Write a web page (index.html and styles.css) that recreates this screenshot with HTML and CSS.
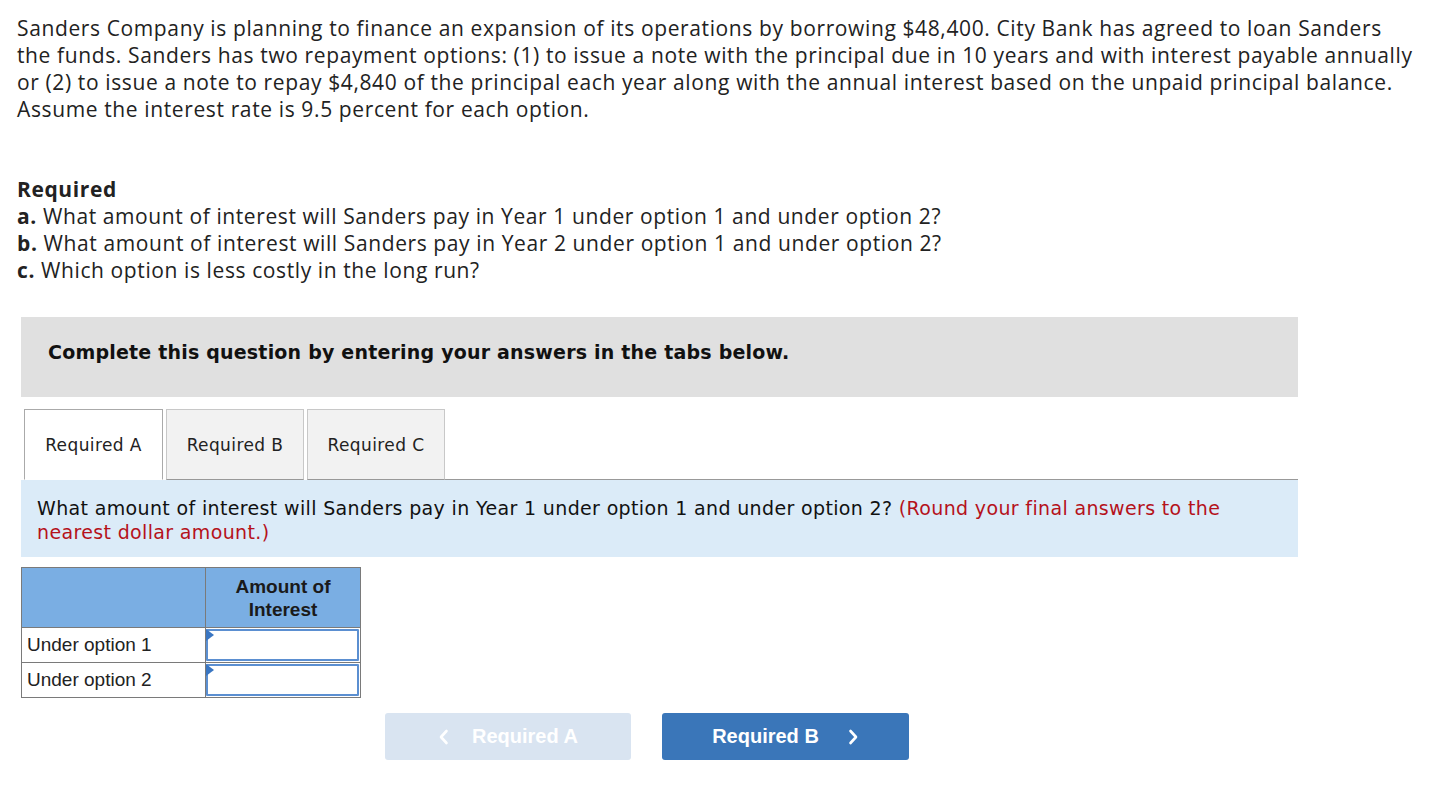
FILE: index.html
```html
<!DOCTYPE html>
<html>
<head>
<meta charset="utf-8">
<link rel="stylesheet" href="styles.css">
</head>
<body>
<div class="page">
  <p class="intro">Sanders Company is planning to finance an expansion of its operations by borrowing $48,400. City Bank has agreed to loan Sanders the funds. Sanders has two repayment options: (1) to issue a note with the principal due in 10 years and with interest payable annually or (2) to issue a note to repay $4,840 of the principal each year along with the annual interest based on the unpaid principal balance. Assume the interest rate is 9.5 percent for each option.</p>

  <div class="required">
    <div class="req-title">Required</div>
    <div><b>a.</b> What amount of interest will Sanders pay in Year 1 under option 1 and under option 2?</div>
    <div><b>b.</b> What amount of interest will Sanders pay in Year 2 under option 1 and under option 2?</div>
    <div><b>c.</b> Which option is less costly in the long run?</div>
  </div>

  <div class="panel">
    <div class="instructions">Complete this question by entering your answers in the tabs below.</div>

    <div class="tabs">
      <div class="tab active">Required A</div>
      <div class="tab">Required B</div>
      <div class="tab">Required C</div>
      <div class="tab-rest"></div>
    </div>

    <p class="question">What amount of interest will Sanders pay in Year 1 under option 1 and under option 2? <span class="hint">(Round your final answers to the nearest dollar amount.)</span></p>

    <table class="grid">
      <tr class="head">
        <th class="blank"></th>
        <th class="col">Amount of<br>Interest</th>
      </tr>
      <tr>
        <td class="label">Under option 1</td>
        <td class="cell"><div class="input"><span class="flag"></span></div></td>
      </tr>
      <tr>
        <td class="label">Under option 2</td>
        <td class="cell"><div class="input"><span class="flag"></span></div></td>
      </tr>
    </table>

    <div class="nav">
      <div class="btn disabled">
        <svg class="chev left" width="11" height="16" viewBox="0 0 11 16"><path d="M8.5 2 L3 8 L8.5 14" fill="none" stroke="#fff" stroke-width="2.6" stroke-linecap="round" stroke-linejoin="round"/></svg>
        <span>Required A</span>
      </div>
      <div class="btn primary">
        <span>Required B</span>
        <svg class="chev right" width="11" height="16" viewBox="0 0 11 16"><path d="M2.5 2 L8 8 L2.5 14" fill="none" stroke="#fff" stroke-width="2.6" stroke-linecap="round" stroke-linejoin="round"/></svg>
      </div>
    </div>
  </div>
</div>
</body>
</html>
```
FILE: styles.css
```css
* { box-sizing: border-box; }
html, body { margin: 0; padding: 0; background: #fff; }
.page { padding: 15px 0 0 17px; color: #222; }

.intro {
  margin: 0;
  width: 1398px;
  font-family: "Open Sans", sans-serif;
  font-size: 21px;
  letter-spacing: 0.62px;
  line-height: 27px;
  color: #222;
}

.required {
  margin-top: 53px;
  font-family: "Open Sans", sans-serif;
  font-size: 21px;
  letter-spacing: 0.6px;
  line-height: 27px;
  color: #222;
}
.req-title { font-weight: 700; }
.required b { font-weight: 700; }

.panel { margin-left: 4px; width: 1277px; margin-top: 33px; }

.instructions {
  background: #e0e0e0;
  height: 80px;
  display: flex;
  align-items: center;
  padding-left: 27px;
  padding-bottom: 10px;
  font-family: "DejaVu Sans", Verdana, sans-serif;
  font-weight: 700;
  font-size: 19px;
  letter-spacing: 0.2px;
  color: #111;
}

.tabs {
  display: flex;
  margin-top: 12px;
  height: 71px;
  align-items: stretch;
}
.tab {
  font-family: "DejaVu Sans", Verdana, sans-serif;
  font-size: 17px;
  letter-spacing: 0.4px;
  color: #222;
  border: 1px solid #c8c8c8;
  border-bottom: 1px solid #999;
  background: #f2f2f2;
  width: 138px;
  display: flex;
  align-items: center;
  justify-content: center;
  margin-right: 3px;
}
.tab:first-child { margin-left: 3px; }
.tab.active { background: #fff; border-color: #aaa; border-bottom: 1px solid #fff; width: 139px; }
.tab-rest { flex: 1; border-bottom: 1px solid #999; margin-left: -3px; }

.question {
  margin: 0;
  background: #dbebf8;
  padding: 16px 16px 13px 16px;
  font-family: "DejaVu Sans", Verdana, sans-serif;
  font-size: 19px;
  letter-spacing: 0.35px;
  line-height: 24px;
  color: #111;
}
.hint { color: #b5121b; }

.grid {
  margin-top: 10px;
  border-collapse: collapse;
  font-family: "Liberation Sans", Arial, sans-serif;
}
.grid th, .grid td { border: 1px solid #7a7a7a; padding: 0; }
.grid .head th {
  background: #7aaee3;
  height: 60px;
  font-weight: 700;
  font-size: 19px;
  line-height: 23px;
  color: #1a1a1a;
  vertical-align: top;
  padding-top: 7px;
}
.grid .blank { width: 184px; }
.grid .col { width: 155px; }
.grid td { height: 35px; }
.grid .label {
  font-size: 19px;
  color: #222;
  padding-left: 5px;
}
.grid .cell { padding: 1px 1px 1px 0; }
.input {
  position: relative;
  height: 32px;
  border: 2px solid #5b8fd1;
  border-radius: 1px;
  background: #fff;
}
.flag {
  position: absolute;
  left: -2px;
  top: -2px;
  width: 0; height: 0;
  border-top: 6px solid transparent;
  border-bottom: 6px solid transparent;
  border-left: 8px solid #3a76c2;
}

.nav {
  display: flex;
  gap: 31px;
  margin-top: 15px;
  margin-left: 364px;
}
.btn {
  width: 247px;
  height: 47px;
  border-radius: 3px;
  display: flex;
  align-items: center;
  justify-content: center;
  font-family: "Liberation Sans", Arial, sans-serif;
  font-weight: 700;
  font-size: 20px;
  color: #fff;
}
.btn.disabled { background: #d9e4f1; width: 246px; }
.btn.primary { background: #3a76b9; }
.chev.left { margin-right: 23px; }
.chev.right { margin-left: 29px; }
```
